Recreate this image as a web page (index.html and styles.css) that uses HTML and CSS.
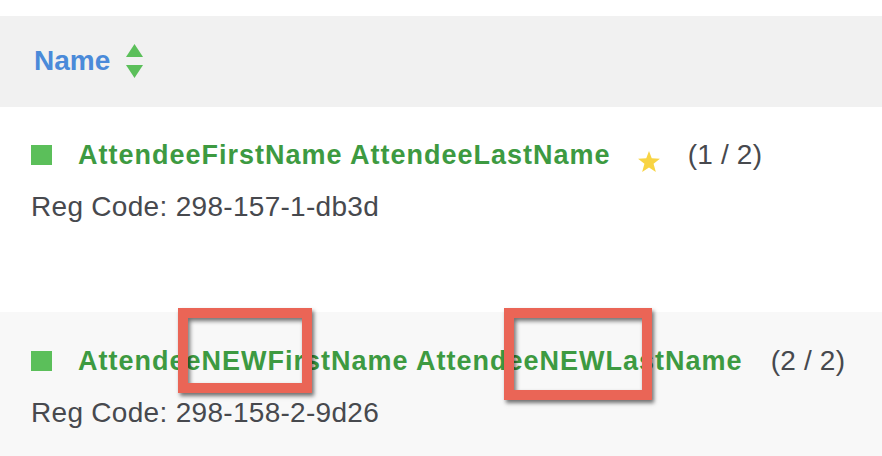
FILE: index.html
```html
<!DOCTYPE html>
<html lang="en">
<head>
    <meta charset="UTF-8">
    <meta name="viewport" content="width=device-width, initial-scale=1.0">
    <title>Attendees</title>
    <link rel="stylesheet" href="styles.css">
</head>
<body>
    <div class="page">
        <div class="list-header">
            <span class="sort-label">Name</span>
            <svg class="sort-icon" width="17" height="34" viewBox="0 0 17 34">
                <polygon points="8.5,0 17,13 0,13" fill="#5bbf5a"/>
                <polygon points="0,21 17,21 8.5,34" fill="#5bbf5a"/>
            </svg>
        </div>

        <div class="attendee">
            <div class="attendee-head">
                <span class="status"></span>
                <span class="attendee-name">AttendeeFirstName AttendeeLastName</span>
                <svg class="star" width="22" height="21" viewBox="0 0 24 23">
                    <polygon points="12,0 15,8 24,8.5 17,14 19.5,23 12,18 4.5,23 7,14 0,8.5 9,8" fill="#f8d444"/>
                </svg>
                <span class="attendee-count">(1 / 2)</span>
            </div>
            <div class="reg-code">Reg Code: 298-157-1-db3d</div>
        </div>

        <div class="attendee attendee-alt">
            <div class="attendee-head">
                <span class="status"></span>
                <span class="attendee-name">AttendeeNEWFirstName AttendeeNEWLastName</span>
                <span class="attendee-count">(2 / 2)</span>
            </div>
            <div class="reg-code">Reg Code: 298-158-2-9d26</div>
        </div>

        <div class="highlight highlight-first"></div>
        <div class="highlight highlight-last"></div>
    </div>
</body>
</html>
```

FILE: styles.css
```css
body {
    margin: 0;
    background: #fff;
    font-family: "Liberation Sans", Arial, sans-serif;
    color: #47494e;
}
.page {
    position: relative;
    padding-top: 16px;
    height: 440px;
    overflow: hidden;
}
.list-header {
    display: flex;
    align-items: center;
    background: #f1f1f1;
    padding: 25px 0 26px 34px;
}
.sort-label {
    font-size: 28px;
    line-height: 40px;
    font-weight: 700;
    color: #4a8ad9;
}
.sort-icon {
    margin-left: 16px;
}
.attendee {
    padding: 30px 0 85px 31px;
}
.attendee-alt {
    background: #f8f8f8;
    padding-top: 31px;
}
.attendee-head {
    display: flex;
    align-items: flex-start;
}
.status {
    width: 21px;
    height: 20px;
    margin: 8px 26px 0 0;
    background: #5bbf5a;
}
.attendee-name {
    font-size: 27px;
    line-height: 36px;
    font-weight: 700;
    letter-spacing: 1px;
    color: #3d9a41;
}
.star {
    margin: 14px 0 0 27px;
}
.attendee-count {
    margin-left: 28px;
    font-size: 28px;
    line-height: 36px;
    letter-spacing: 0.2px;
}
.reg-code {
    margin-top: 14px;
    font-size: 28px;
    line-height: 40px;
    letter-spacing: 0.3px;
}
.highlight {
    position: absolute;
    box-sizing: border-box;
    border: 10px solid #ea6556;
    box-shadow: 2px 3px 4px rgba(0, 0, 0, 0.55), inset 2px 3px 4px rgba(0, 0, 0, 0.55);
}
.highlight-first {
    left: 178px;
    top: 308px;
    width: 134px;
    height: 85px;
}
.highlight-last {
    left: 504px;
    top: 308px;
    width: 148px;
    height: 92px;
}
```
